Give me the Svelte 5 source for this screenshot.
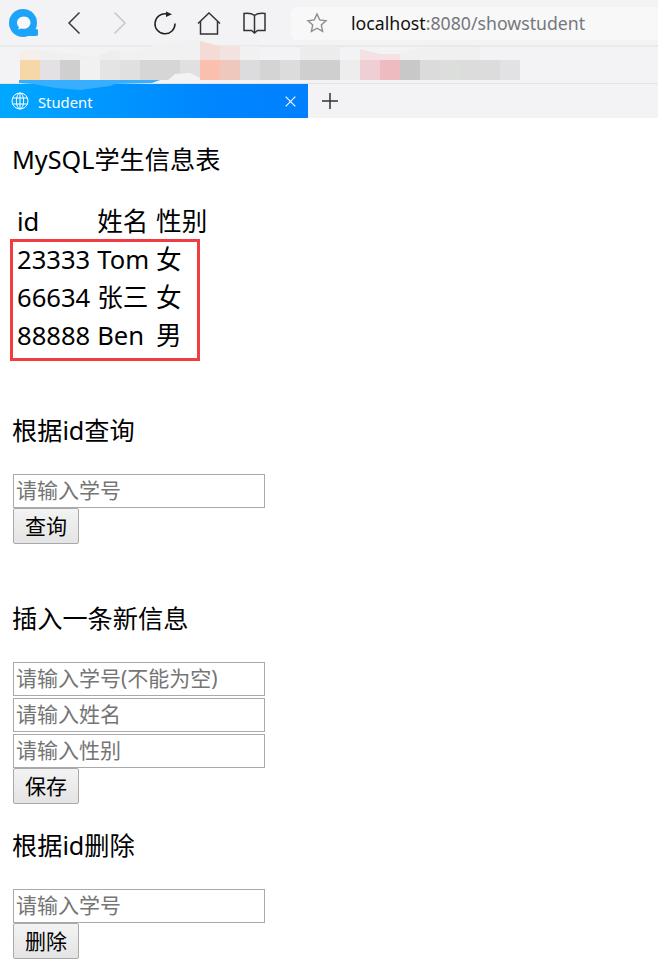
<script>
  const blocks = ['#f6d7a7','#e3e1e3','#cfcfd0','#f1f1f2','#e4e4e5','#e0e0e1','#d6d6d7','#d6d6d7','#e0e0e1','#fbbfae','#efc8bd','#dcdcdf','#d4d4d5','#dcdcdc','#cfcfd0','#cfcfd0','#ededee','#f0cfd4','#eebcc0','#c8c8c8','#dbdbdb','#dcdedc','#dcdcdc','#dcdcdc','#e2e2e4'];
  const rows = [['23333','Tom','女'],['66634','张三','女'],['88888','Ben','男']];
</script>

<div class="chrome">
  <div class="toolbar">
    <svg class="logo" viewBox="0 0 29 29" width="29" height="29">
      <circle cx="14" cy="14" r="14" fill="#1da4f8"/>
      <path d="M17 20h9.500a3 3 0 0 1 0 7H17z" fill="#1da4f8"/>
      <path d="M15 7.500c-4 0-7 2.800-7 6.300 0 2 .8 3.400 2 4.400l-1 2.300 3.200-1.100c.9.300 1.800.4 2.800.4 3.700 0 6.500-2.700 6.500-6 0-3.500-2.800-6.300-6.500-6.300z" fill="#f8f8fb"/>
    </svg>
    <svg class="nav back" viewBox="0 0 14 24" width="14" height="24"><path d="M12.500 1.500 2 12l10.500 10.500" fill="none" stroke="#3c3c3c" stroke-width="1.500"/></svg>
    <svg class="nav fwd" viewBox="0 0 14 24" width="14" height="24"><path d="M1.500 1.500 12 12 1.500 22.500" fill="none" stroke="#c8c8ca" stroke-width="1.500"/></svg>
    <svg class="nav reload" viewBox="0 0 24 24" width="24" height="24"><path d="M14 3a10 10 0 1 0 8 9.500" fill="none" stroke="#222" stroke-width="1.500"/><path d="M13 .5l6 2.800-6 2.700z" fill="#222"/></svg>
    <svg class="nav home" viewBox="0 0 24 23" width="24" height="23"><path d="M1 11.500 12 1l11 10.500M3.500 9.500v12.500h17V9.500" fill="none" stroke="#333" stroke-width="1.500"/></svg>
    <svg class="nav book" viewBox="0 0 23 23" width="23" height="23"><path d="M11.500 3.500C9.500 1.800 5.500 1 1 1.500v17h7.500l3 2.500 3-2.500H22v-17c-4.500-.5-8.500.3-10.500 2zM11.500 3.500V21" fill="none" stroke="#333" stroke-width="1.500"/></svg>
    <div class="address">
      <svg viewBox="0 0 22 22" width="22" height="22"><path d="M11 2l2.700 5.900 6.300.8-4.700 4.300 1.300 6.400L11 16.200l-5.600 3.200 1.300-6.400L2 8.700l6.300-.8z" fill="none" stroke="#8e8e8e" stroke-width="1.400"/></svg>
      <span class="url"><span class="host">localhost</span><span class="rest">:8080/showstudent</span></span>
    </div>
  </div>
  <div class="bookmarks">
    <div class="pixels">{#each blocks as c}<i style="background:{c}"></i>{/each}</div>
  </div>
  <div class="tabs">
    <div class="tab">
      <svg viewBox="0 0 18 18" width="18" height="18"><g fill="none" stroke="#fff" stroke-width="1"><circle cx="9" cy="9" r="8"/><ellipse cx="9" cy="9" rx="3.600" ry="8"/><path d="M1.500 6h15M1.500 12h15M9 1v16"/></g></svg>
      <span class="title">Student</span>
      <svg class="close" viewBox="0 0 11 11" width="11" height="11"><path d="M.7.7l9.600 9.600M10.300.7.7 10.300" stroke="#fff" stroke-width="1.100"/></svg>
    </div>
    <svg class="plus" viewBox="0 0 18 18" width="18" height="18"><path d="M9 1v16M1 9h16" stroke="#333" stroke-width="1.500"/></svg>
  </div>
  <svg class="smear" viewBox="0 0 658 118" width="658" height="118" aria-hidden="true">
    <path d="M20 50h20v10H20z" fill="#f6eee8"/>
    <path d="M40 50l20 2 20 3 20 2v3H40z" fill="#f1f0f1"/>
    <path d="M100 55l10-4 10-1v10h-20z" fill="#eeeeef"/>
    <path d="M120 51l20-1 20-7 20-2 20 0v19h-80z" fill="#f1f1f2"/>
    <path d="M200 41l20 5v14h-20z" fill="#f5dbd5"/>
    <path d="M220 46h20v14h-20z" fill="#f3e3e0"/>
    <path d="M240 46h20v14h-20zM300 46h20v14h-20z" fill="#f1f1f2"/>
    <path d="M300 46h40v14h-40z" fill="#ececed"/>
    <path d="M360 49l20 5h20v6h-40z" fill="#f3e1e4"/>
    <path d="M400 54l20-6 60-1v13h-80z" fill="#f0f0f1"/>
    <path d="M168 80l7-6 15-1 10 5v3h-32z" fill="#f3f3f5"/>
    <path d="M19 80h141l-8 3-37 1-5 2-30 4-24-2-23-4-14-1z" fill="#38aeff"/>
  </svg>
</div>

<main>
  <h3 class="first">MySQL学生信息表</h3>
  <div class="tablewrap">
    <table>
      <thead><tr><td>id</td><td>姓名</td><td>性别</td></tr></thead>
      <tbody>
        {#each rows as r}<tr><td>{r[0]}</td><td>{r[1]}</td><td>{r[2]}</td></tr>{/each}
      </tbody>
    </table>
    <div class="mark"></div>
  </div>

  <h3 class="query">根据id查询</h3>
  <div class="form">
    <input placeholder="请输入学号" />
    <button>查询</button>
  </div>

  <h3 class="insert">插入一条新信息</h3>
  <div class="form stacked">
    <input placeholder="请输入学号(不能为空)" />
    <input placeholder="请输入姓名" />
    <input placeholder="请输入性别" />
    <button>保存</button>
  </div>

  <h3 class="del">根据id删除</h3>
  <div class="form">
    <input placeholder="请输入学号" />
    <button>删除</button>
  </div>
</main>

<style>
  :global(body) { margin: 0; background: #fff; }
  :global(html), :global(body) { overflow: hidden; }
  .chrome { background: #f3f3f5; font-family: "Noto Sans", "Noto Sans CJK SC", sans-serif; position: relative; }
  .toolbar { height: 47px; box-sizing: border-box; padding-top: 1px; display: flex; align-items: center; border-bottom: 2px solid #e9e9eb; }
  .logo { margin-left: 9px; flex: none; }
  .nav { flex: none; }
  .back { margin-left: 29px; }
  .fwd { margin-left: 32px; }
  .reload { margin-left: 26px; }
  .home { margin-left: 20px; }
  .book { margin-left: 22px; }
  .address { margin-left: 25px; flex: 1; height: 33px; background: #f8f8f9; border-radius: 6px 0 0 6px; display: flex; align-items: center; padding-left: 15px; }
  .url { margin-left: 23px; font-size: 17.700px; white-space: nowrap; }
  .host { color: #111; }
  .rest { color: #75777c; }
  .bookmarks { height: 37px; box-sizing: border-box; position: relative; border-bottom: 1px solid #e4e4e6; overflow: hidden; }
  .pixels { position: absolute; left: 20px; top: 13px; display: flex; }
  .pixels i { width: 20px; height: 20px; display: block; }
  .smear { position: absolute; left: 0; top: 0; pointer-events: none; }
  .tabs { height: 34px; display: flex; align-items: center; }
  .tab { width: 308px; height: 34px; box-sizing: border-box; background: linear-gradient(90deg, #00a8ff, #0085ff 70%, #0080ff); display: flex; align-items: center; padding: 0 12px 0 11px; color: #fff; flex: none; }
  .title { margin: 1px 0 0 9px; font-size: 14.800px; flex: 1; }
  .plus { margin-left: 13px; }

  main { font-family: "Noto Sans", "Noto Sans CJK SC", sans-serif; color: #000; padding-left: 13px; }
  h3 { margin: 0 0 0 -1px; font-size: 25.200px; font-weight: 400; line-height: 34px; }
  .first { margin-top: 24px; }
  .tablewrap { position: relative; margin-top: 27px; }
  table { border-collapse: separate; border-spacing: 0; font-size: 25.600px; }
  td { padding: 0 4px; height: 38px; line-height: 38px; white-space: nowrap; }
  td:first-child { width: 71px; }
  td:nth-child(2) { padding-left: 3px; padding-right: 3px; }
  .mark { position: absolute; left: -3px; top: 36px; width: 184px; height: 116px; border: 3px solid #f33c3f; }
  .query { margin-top: 58px; }
  .insert { margin-top: 57px; }
  .del { margin-top: 24px; }
  .form { margin-top: 27px; display: flex; flex-direction: column; align-items: flex-start; }
  .stacked input + input { margin-top: 2px; }
  input { width: 252px; height: 34px; box-sizing: border-box; border: 1px solid #a9a9a9; padding: 0 2px 2px; margin: 0; font: 21px "Noto Sans", "Noto Sans CJK SC", sans-serif; background: #fff; outline: none; border-radius: 0; }
  input::placeholder { color: #757575; opacity: 1; }
  button { width: 66px; height: 36px; box-sizing: border-box; border: 1px solid #a9a9a9; border-radius: 2px; background: linear-gradient(#f3f3f3, #e4e4e4); font: 21px "Noto Sans", "Noto Sans CJK SC", sans-serif; color: #000; padding: 0 0 3px; margin: 0; }
</style>
